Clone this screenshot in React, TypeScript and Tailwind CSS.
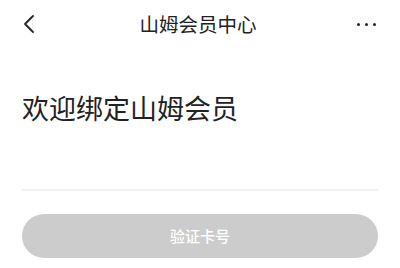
import React from "react";

export default function App() {
  const font = { fontFamily: '"Noto Sans CJK SC", "Noto Sans", sans-serif' };
  return (
    <div className="w-[400px] h-[268px] bg-white overflow-hidden" style={font}>
      <div className="h-[48px] flex items-center justify-between px-[22px]">
        <svg width="12" height="20" viewBox="0 0 12 20" className="ml-[1px]">
          <path d="M10 2 L2 10 L10 18" fill="none" stroke="#222" strokeWidth="1.8" strokeLinecap="round" strokeLinejoin="round" />
        </svg>
        <div className="text-[19.5px] text-[#222] leading-none ml-[4px]">山姆会员中心</div>
        <div className="flex gap-[5px] mr-[2px]">
          <span className="w-[3px] h-[3px] rounded-full bg-[#222]" />
          <span className="w-[3px] h-[3px] rounded-full bg-[#222]" />
          <span className="w-[3px] h-[3px] rounded-full bg-[#222]" />
        </div>
      </div>
      <div className="px-[22px]">
        <div className="mt-[46px] text-[27px] leading-[28px] text-[#222]">欢迎绑定山姆会员</div>
        <div className="mt-[67px] h-[2px] bg-[#f2f2f2]" />
        <button className="mt-[23px] w-full h-[44px] rounded-full bg-[#cccccc] text-white text-[15px] font-medium flex items-center justify-center">
          验证卡号
        </button>
      </div>
    </div>
  );
}
